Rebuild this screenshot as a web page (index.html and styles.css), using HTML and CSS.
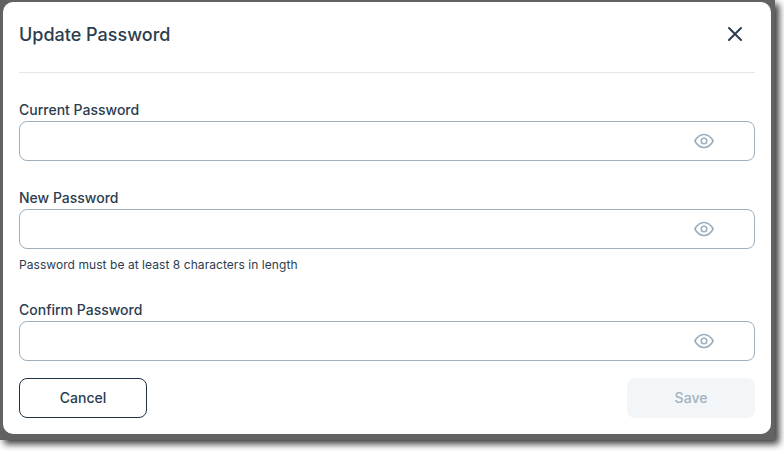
FILE: index.html
```html
<!DOCTYPE html>
<html lang="en">
<head>
    <meta charset="UTF-8">
    <title>Update Password</title>
    <link rel="stylesheet" href="styles.css">
</head>
<body>
    <div class="backdrop">
        <div class="modal">
            <header class="modal-header">
                <h2>Update Password</h2>
                <button class="close-btn" type="button" aria-label="Close">
                    <svg width="24" height="24" viewBox="0 0 24 24" fill="none" stroke="#2b3d4f" stroke-width="2" stroke-linecap="round"><path d="M6 6l12 12M18 6L6 18"/></svg>
                </button>
            </header>
            <form class="modal-body">
                <div class="field">
                    <label for="current">Current Password</label>
                    <div class="input-wrap">
                        <input id="current" type="password">
                        <svg class="eye" width="22" height="22" viewBox="0 0 24 24" fill="none" stroke="#9dafbd" stroke-width="1.7" stroke-linejoin="round"><path d="M2 12c2.600-4.700 6-7 10-7s7.400 2.300 10 7c-2.600 4.700-6 7-10 7s-7.400-2.300-10-7z"/><circle cx="12" cy="12" r="3"/></svg>
                    </div>
                </div>
                <div class="field">
                    <label for="new">New Password</label>
                    <div class="input-wrap">
                        <input id="new" type="password">
                        <svg class="eye" width="22" height="22" viewBox="0 0 24 24" fill="none" stroke="#9dafbd" stroke-width="1.7" stroke-linejoin="round"><path d="M2 12c2.600-4.700 6-7 10-7s7.400 2.300 10 7c-2.600 4.700-6 7-10 7s-7.400-2.300-10-7z"/><circle cx="12" cy="12" r="3"/></svg>
                    </div>
                    <p class="hint">Password must be at least 8 characters in length</p>
                </div>
                <div class="field">
                    <label for="confirm">Confirm Password</label>
                    <div class="input-wrap">
                        <input id="confirm" type="password">
                        <svg class="eye" width="22" height="22" viewBox="0 0 24 24" fill="none" stroke="#9dafbd" stroke-width="1.7" stroke-linejoin="round"><path d="M2 12c2.600-4.700 6-7 10-7s7.400 2.300 10 7c-2.600 4.700-6 7-10 7s-7.400-2.300-10-7z"/><circle cx="12" cy="12" r="3"/></svg>
                    </div>
                </div>
                <div class="actions">
                    <button class="btn btn-cancel" type="button">Cancel</button>
                    <button class="btn btn-save" type="button" disabled>Save</button>
                </div>
            </form>
        </div>
    </div>
</body>
</html>
```

FILE: styles.css
```css
html, body {
    height: 100%;
}
body {
    margin: 0;
    background: #fff;
    font-family: Inter, sans-serif;
    color: #2b3d4f;
    padding: 0 9px 11px 0;
    box-sizing: border-box;
    overflow: hidden;
}
.backdrop {
    height: 100%;
    box-sizing: border-box;
    padding: 2px 4px 6px 3px;
    background: #626262;
    box-shadow: 4px 4px 7px #3a3a3a;
}
.modal {
    height: 100%;
    background: #fff;
    border-radius: 10px;
    padding: 0 16px;
}
.modal-header {
    display: flex;
    align-items: center;
    justify-content: space-between;
    height: 64px;
    padding-bottom: 6px;
    border-bottom: 1px solid #e2e6ea;
}
.modal-header h2 {
    margin: 0;
    font-size: 18px;
    font-weight: 500;
}
.close-btn {
    display: flex;
    padding: 0;
    margin-right: 8px;
    background: none;
    border: 0;
}
.modal-body {
    padding-top: 27px;
}
.field {
    margin-bottom: 27px;
}
.field label {
    display: block;
    font-size: 14px;
    font-weight: 500;
    line-height: 20px;
    margin-bottom: 1px;
}
.input-wrap {
    position: relative;
}
.input-wrap input {
    display: block;
    width: 100%;
    height: 40px;
    box-sizing: border-box;
    border: 1px solid #9fb0be;
    border-radius: 8px;
    outline: none;
}
.eye {
    position: absolute;
    top: 9px;
    right: 40px;
}
.hint {
    margin: 8px 0 0;
    font-size: 12px;
    line-height: 16px;
    letter-spacing: 0.06px;
}
.actions {
    display: flex;
    justify-content: space-between;
    margin-top: -10px;
}
.btn {
    width: 128px;
    height: 40px;
    padding: 0 0 1px;
    border-radius: 8px;
    font-family: inherit;
    font-size: 14px;
    font-weight: 500;
}
.btn-cancel {
    background: #fff;
    border: 1px solid #1f3344;
    color: #2b3d4f;
}
.btn-save {
    background: #f2f6f9;
    border: 0;
    color: #a3b1bd;
}
```
